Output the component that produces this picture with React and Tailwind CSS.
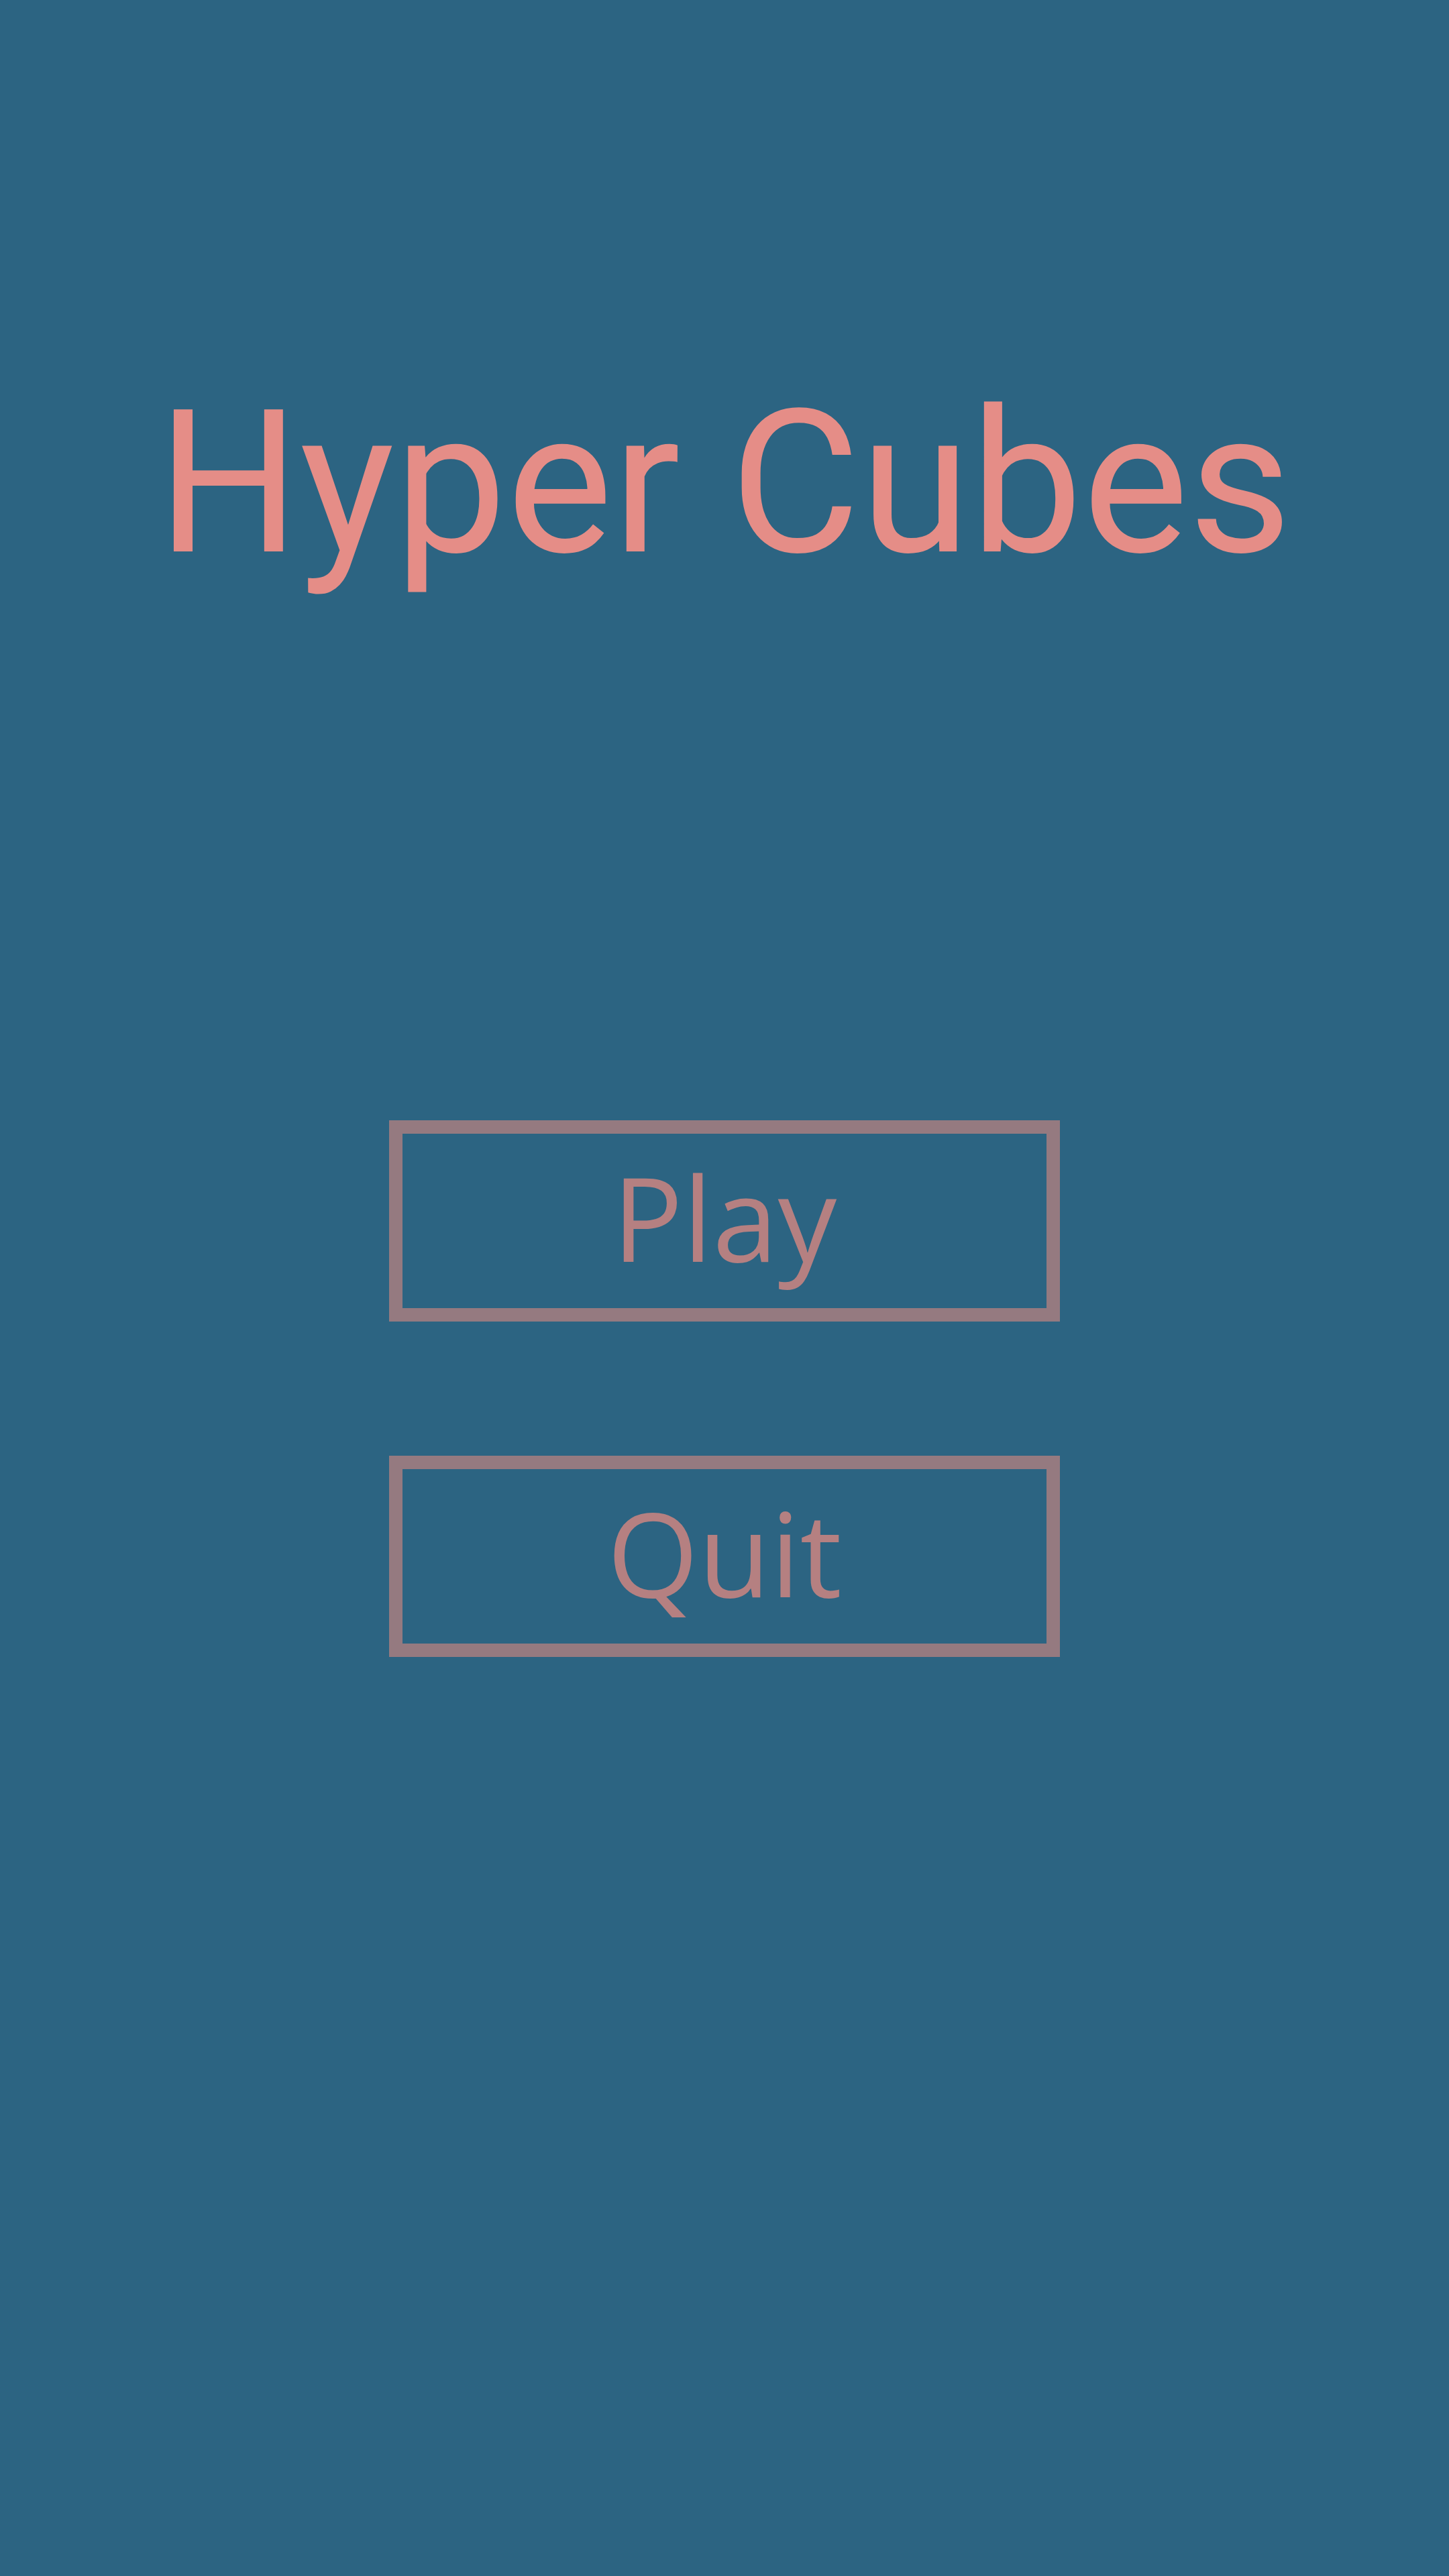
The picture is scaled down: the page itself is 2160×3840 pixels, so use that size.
import React from 'react';

const MenuButton = ({ label }) => (
  <button
    type="button"
    className="w-[1000px] h-[300px] border-[20px] border-[#957a80] bg-transparent flex items-center justify-center pb-[14px] text-[#b58081] text-[175px] leading-none"
    style={{ fontFamily: '"Open Sans", "Noto Sans", sans-serif' }}
  >
    {label}
  </button>
);

const App = () => {
  return (
    <div className="w-[2160px] h-[3840px] bg-[#2c6482] flex flex-col items-center">
      <h1
        className="mt-[572px] text-[298px] leading-none font-normal text-[#e58d87]"
        style={{ fontFamily: 'Roboto, "Liberation Sans", sans-serif' }}
      >
        Hyper Cubes
      </h1>

      <div className="mt-[800px] flex flex-col items-center gap-[200px]">
        <MenuButton label="Play" />
        <MenuButton label="Quit" />
      </div>
    </div>
  );
};

export default App;
